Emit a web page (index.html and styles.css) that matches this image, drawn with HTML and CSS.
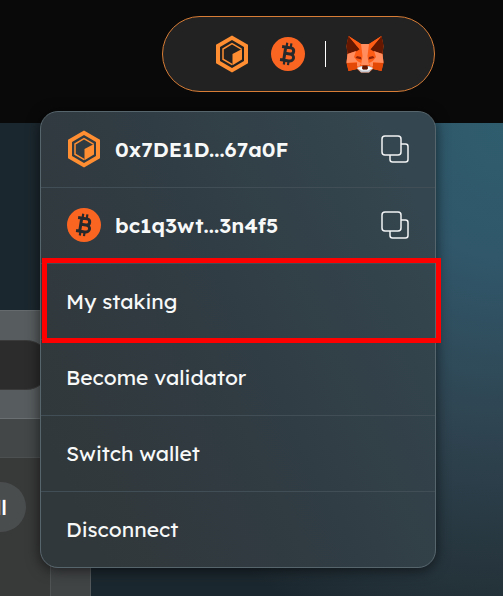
FILE: index.html
```html
<!DOCTYPE html>
<html lang="en">
<head>
  <meta charset="UTF-8">
  <meta name="viewport" content="width=device-width, initial-scale=1">
  <title>Wallet menu</title>
  <link rel="stylesheet" href="styles.css">
</head>
<body>
  <!-- shared icons -->
  <svg class="sprite" aria-hidden="true">
    <symbol id="core" viewBox="0 0 34 38">
      <path fill="#ff8e32" fill-rule="evenodd" d="M17 .5 33 9.7v18.600L17 37.500 1 28.300V9.700zM17 5 5 12v14l12 7 12-7V12z"/>
      <path fill="none" stroke="#ff8e32" stroke-width="1.500" d="M26.500 14.200 17 8.700 8 14v10.200l9.300 5.400"/>
      <path fill="#ff8e32" d="M17.500 19 27 14v10.500l-9.500 5.800z"/>
    </symbol>
    <symbol id="btc" viewBox="0 0 34 34">
      <circle cx="17" cy="17" r="17" fill="#fb6522"/>
      <g transform="rotate(9 17 17)" fill="none" stroke="#26292b" stroke-width="3">
        <path d="M10 10.500h8.800c4.500 0 4.500 6.200 0 6.200H14M18.800 16.700c5.700 0 5.700 7 0 7H10M13.700 10v14"/>
        <path stroke-width="2.200" d="M14.500 6v4M18.700 6v4M14.500 24v4M18.700 24v4"/>
      </g>
    </symbol>
    <symbol id="copy" viewBox="0 0 28 28">
      <g fill="none" stroke="#f1f3f4" stroke-width="1.500">
        <rect x="1" y="1" width="19" height="19" rx="3"/>
        <path d="M20 9h4.500a2.500 2.500 0 0 1 2.500 2.500v13a2.500 2.500 0 0 1-2.500 2.500h-13A2.500 2.500 0 0 1 9 24.500V20"/>
      </g>
    </symbol>
  </svg>

  <header class="header">
    <div class="wallet">
      <button class="wallet-btn" type="button" aria-label="Wallet" aria-expanded="true">
        <span class="coins">
          <svg class="coin"><use href="#core"/></svg>
          <svg class="coin"><use href="#btc"/></svg>
        </span>
        <span class="divider"></span>
        <svg class="fox" viewBox="0 0 38 38">
          <path fill="#ff5c16" d="M2.500 1 15 9h8L35.500 1 37.500 11l-1 8 1 8-2 9-8.500-2-4 3.500h-8L11 34l-8.500 2-2-9 1-8-1-8z"/>
          <path fill="#661800" d="M2.500 1 14 14l-3 2-9.500 3L.5 10zM35.500 1 24 14l3 2 9.500 3 1-9z"/>
          <path fill="#ff5c16" d="M2.500 1 15 9l-1 6zM35.500 1 23 9l1 6z"/>
          <path fill="#ff8d5d" d="M15 9h8l-1.500 12 1.500 9h-8l1.500-9zM1.500 19 10 16l-2 6 4 5-11.500 1zM36.500 19 28 16l2 6-4 5 11.500 1z"/>
          <path fill="#ff8d5d" d="m11 26 4 2-2 4-2-1zM27 26l-4 2 2 4 2-1z"/>
          <path fill="#e34807" d="M.5 28H11v6l-8.500 2zM37.500 28H27v6l8.500 2z"/>
          <path fill="#8f2408" d="m9.500 23 1.500-2 4 1 .5 2.500zM28.500 23 27 21l-4 1-.5 2.500z"/>
          <path fill="#c0c4cd" d="m11 33 4-2h8l4 2-4 4.500h-8z"/>
          <path fill="#fff" d="m11 33 5-1 1 3h4l1-3 5 1-5 2.500h-6z"/>
          <path fill="#661800" d="M16.500 30.500h5l.5 3-1 1h-4l-1-1z"/>
        </svg>
      </button>

      <div class="menu">
        <div class="item account">
          <svg class="coin"><use href="#core"/></svg>
          <span class="address">0x7DE1D...67a0F</span>
          <button class="copy" type="button" aria-label="Copy Core address"><svg><use href="#copy"/></svg></button>
        </div>
        <div class="item account">
          <svg class="coin"><use href="#btc"/></svg>
          <span class="address">bc1q3wt...3n4f5</span>
          <button class="copy" type="button" aria-label="Copy Bitcoin address"><svg><use href="#copy"/></svg></button>
        </div>
        <a class="item marked" href="#">My staking</a>
        <a class="item" href="#">Become validator</a>
        <a class="item" href="#">Switch wallet</a>
        <button class="item" type="button">Disconnect</button>
      </div>
    </div>
  </header>

  <main class="page">
    <section class="panel">
      <div class="search">
        <input class="search-input" type="text" aria-label="Search">
      </div>
      <div class="panel-head"></div>
      <div class="panel-body">
        <button class="filter" type="button">All</button>
      </div>
    </section>
  </main>
</body>
</html>
```

FILE: styles.css
```css
* {
  box-sizing: border-box;
}
body {
  margin: 0;
  min-height: 100vh;
  display: flex;
  flex-direction: column;
  overflow: hidden;
  background: #1b242a;
  color: #fff;
  font-family: Lexend, Inter, sans-serif;
  font-size: 21px;
}
button {
  font: inherit;
  color: inherit;
  border: none;
  cursor: pointer;
}
.sprite {
  position: absolute;
  width: 0;
  height: 0;
}

/* header */
.header {
  display: flex;
  justify-content: flex-end;
  height: 123px;
  padding: 16px 68px 0 0;
  background: #090909;
}
.wallet {
  position: relative;
}
.wallet-btn {
  display: flex;
  align-items: center;
  gap: 20px;
  height: 76px;
  padding: 0 50px 0 52px;
  background: #222;
  border: 1px solid #d87d36;
  border-radius: 38px;
}
.coins {
  display: flex;
  gap: 22px;
}
.coin {
  width: 34px;
  height: 38px;
  flex: none;
}
.divider {
  width: 1px;
  height: 26px;
  background: #fff;
}
.fox {
  width: 38px;
  height: 38px;
}

/* dropdown */
.menu {
  position: absolute;
  z-index: 1;
  top: 95px;
  right: -1px;
  width: 396px;
  border: 1px solid #56646b;
  border-radius: 18px;
  background: linear-gradient(65deg, #31383b 10%, #303b42 45%, #34464f 90%);
  box-shadow: 0 2px 14px rgba(0,0,0,0.6);
}
.item {
  display: flex;
  align-items: center;
  width: 100%;
  height: 76px;
  padding: 0 26px 2px 25px;
  background: none;
  border-bottom: 1px solid #414e55;
  color: #f7f8f8;
  text-decoration: none;
}
.item:last-child {
  height: 75px;
  border-bottom: none;
}
.account {
  gap: 14px;
  padding-left: 26px;
}
.address {
  flex: 1;
  font-weight: 600;
}
.copy {
  padding: 0;
  background: none;
}
.copy svg {
  display: block;
  width: 28px;
  height: 28px;
}
.marked {
  position: relative;
}
.marked::after {
  content: "";
  position: absolute;
  inset: -6px -6px -4px 1px;
  border: 5px solid #f00;
}

/* page behind the menu */
.page {
  flex: 1;
  display: flex;
  padding-top: 187px;
  background: radial-gradient(ellipse 460px 540px at 100% 0, #2f5d6e, #30576a 25%, #2f4552 55%, #25333b 85%, #1b272e);
}
.panel {
  display: flex;
  flex-direction: column;
  width: 131px;
  margin-left: -40px;
  background: #414445;
  border-top: 1px solid #656b6d;
  border-right: 1px solid #53585a;
}
.search {
  height: 108px;
  padding: 29px 39px 0 0;
  background: #575c5e;
  border-bottom: 1px solid #6a6f71;
}
.search-input {
  display: block;
  width: 100%;
  height: 50px;
  border: 1px solid #3a3a3a;
  border-radius: 25px;
  background: #2c2c2c;
  color: inherit;
}
.panel-head {
  height: 38px;
  background: #434748;
}
.panel-body {
  flex: 1;
  margin-right: 39px;
  padding-top: 24px;
  background: #383939;
  border-top: 1px solid #4d5051;
  border-right: 1px solid #505354;
}
.filter {
  width: 66px;
  height: 50px;
  padding: 0 19px 0 0;
  border-radius: 25px;
  background: #4a4d4e;
  font-weight: 500;
  text-align: right;
}
```
